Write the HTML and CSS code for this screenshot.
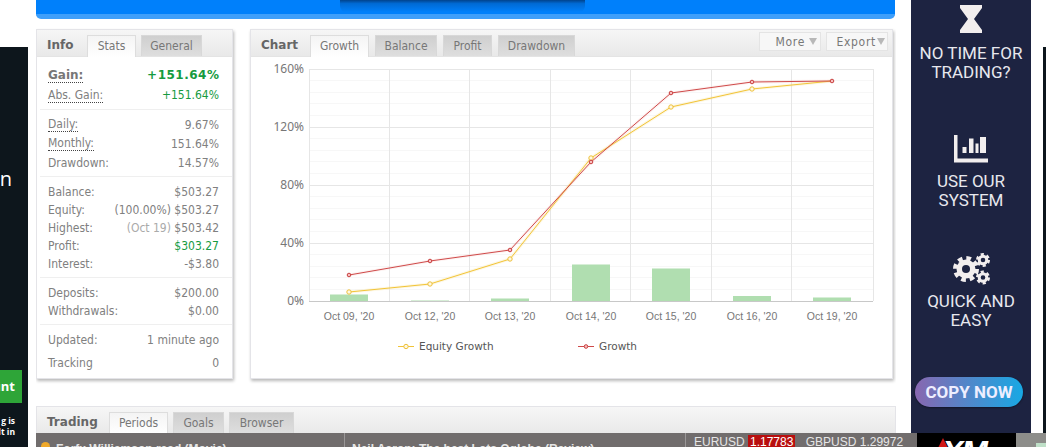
FILE: index.html
```html
<!DOCTYPE html>
<html lang="en">
<head>
<meta charset="utf-8">
<title>Stats</title>
<link rel="stylesheet" href="styles.css">
</head>
<body>
<div class="page">
  <aside class="ad-left">
    <div class="ad-left-word">on</div>
    <div class="ad-left-btn">unt</div>
    <div class="ad-left-small">g is<br>lt in</div>
  </aside>

  <main class="main">
    <div class="hero"><div class="hero-shade"></div></div>

    <div class="panels">
      <section class="panel panel-info">
        <header class="tabs">
          <h2 class="tabs-title">Info</h2>
          <span class="tab tab-on tab-stats">Stats</span>
          <span class="tab tab-general">General</span>
        </header>
        <div class="group g1">
          <div class="row row-big"><span class="dot">Gain:</span><span class="green wide">+151.64%</span></div>
          <div class="row row-tall"><span class="dot">Abs. Gain:</span><span class="green">+151.64%</span></div>
        </div>
        <div class="group g2">
          <div class="row"><span class="dot">Daily:</span><span>9.67%</span></div>
          <div class="row"><span class="dot">Monthly:</span><span>151.64%</span></div>
          <div class="row"><span>Drawdown:</span><span>14.57%</span></div>
        </div>
        <div class="group g3">
          <div class="row"><span>Balance:</span><span>$503.27</span></div>
          <div class="row"><span>Equity:</span><span>(100.00%) $503.27</span></div>
          <div class="row"><span>Highest:</span><span><span class="faint">(Oct 19)</span> $503.42</span></div>
          <div class="row"><span>Profit:</span><span class="green">$303.27</span></div>
          <div class="row"><span>Interest:</span><span>-$3.80</span></div>
        </div>
        <div class="group g3">
          <div class="row"><span>Deposits:</span><span>$200.00</span></div>
          <div class="row"><span>Withdrawals:</span><span>$0.00</span></div>
        </div>
        <div class="group g5">
          <div class="row"><span>Updated:</span><span>1 minute ago</span></div>
          <div class="row"><span>Tracking</span><span>0</span></div>
        </div>
      </section>

      <section class="panel panel-chart">
        <header class="tabs">
          <h2 class="tabs-title">Chart</h2>
          <span class="tab tab-on tab-growth">Growth</span>
          <span class="tab tab-balance">Balance</span>
          <span class="tab tab-profit">Profit</span>
          <span class="tab tab-drawdown">Drawdown</span>
          <div class="tools">
            <span class="tool tool-more">More <i class="caret"></i></span>
            <span class="tool tool-export">Export<i class="caret"></i></span>
          </div>
        </header>
        <svg class="chart" width="641" height="321" viewBox="251 57 641 321" xmlns="http://www.w3.org/2000/svg">
          <g class="minor">
            <path d="M309 80.5H873M309 92.5H873M309 103.500H873M309 115.500H873M309 138.500H873M309 150.500H873M309 161.500H873M309 173.500H873M309 196.500H873M309 208.500H873M309 219.500H873M309 231.500H873M309 254.500H873M309 266.500H873M309 277.500H873M309 289.500H873"/>
          </g>
          <g class="grid">
            <path d="M309 69.5H873M309 127.5H873M309 185.5H873M309 243.5H873"/>
            <path d="M309.5 69V301M389.5 69V301M469.5 69V301M550.5 69V301M630.5 69V301M711.5 69V301M791.5 69V301M873.5 69V301"/>
          </g>
          <g class="bars">
            <rect x="330" y="294.500" width="38" height="7"/>
            <rect x="411" y="300.500" width="38" height="1"/>
            <rect x="491" y="298.500" width="38" height="3"/>
            <rect x="572" y="264.500" width="38" height="37"/>
            <rect x="652" y="268.500" width="38" height="33"/>
            <rect x="733" y="296" width="38" height="5.500"/>
            <rect x="813" y="297.500" width="38" height="4"/>
          </g>
          <path class="axis" d="M309 301.5H873"/>
          <polyline class="halo-eq" points="349,292 430,284 510,259 591,158 671,107 752,89 832,81"/>
          <polyline class="halo-gr" points="349,275 430,261 510,250 591,162 671,93 752,82 832,81"/>
          <polyline class="line-eq" points="349,292 430,284 510,259 591,158 671,107 752,89 832,81"/>
          <polyline class="line-gr" points="349,275 430,261 510,250 591,162 671,93 752,82 832,81"/>
          <g class="pts-eq">
            <circle cx="349" cy="292" r="2.200"/><circle cx="430" cy="284" r="2.200"/><circle cx="510" cy="259" r="2.200"/><circle cx="591" cy="158" r="2.200"/><circle cx="671" cy="107" r="2.200"/><circle cx="752" cy="89" r="2.200"/>
          </g>
          <g class="pts-gr">
            <circle cx="349" cy="275" r="1.800"/><circle cx="430" cy="261" r="1.800"/><circle cx="510" cy="250" r="1.800"/><circle cx="591" cy="162" r="1.800"/><circle cx="671" cy="93" r="1.800"/><circle cx="752" cy="82" r="1.800"/><circle cx="832" cy="81" r="1.800"/>
          </g>
          <g class="ylab">
            <text x="304" y="73">160%</text>
            <text x="304" y="131">120%</text>
            <text x="304" y="189">80%</text>
            <text x="304" y="247">40%</text>
            <text x="304" y="305">0%</text>
          </g>
          <g class="xlab">
            <text x="349" y="320">Oct 09, '20</text>
            <text x="430" y="320">Oct 12, '20</text>
            <text x="510" y="320">Oct 13, '20</text>
            <text x="591" y="320">Oct 14, '20</text>
            <text x="671" y="320">Oct 15, '20</text>
            <text x="752" y="320">Oct 16, '20</text>
            <text x="832" y="320">Oct 19, '20</text>
          </g>
          <g class="legend">
            <path class="line-eq" d="M398 346.5H414"/>
            <circle class="pt-eq" cx="406" cy="346.5" r="2.200"/>
            <text x="419" y="350">Equity Growth</text>
            <path class="line-gr" d="M578 346.5H594"/>
            <circle class="pt-gr" cx="586" cy="346.5" r="1.800"/>
            <text x="599" y="350">Growth</text>
          </g>
        </svg>
      </section>
    </div>

    <section class="panel panel-trading">
      <header class="tabs">
        <h2 class="tabs-title">Trading</h2>
        <span class="tab tab-on tab-periods">Periods</span>
        <span class="tab tab-goals">Goals</span>
        <span class="tab tab-browser">Browser</span>
      </header>
    </section>
  </main>

  <aside class="ad-right">
    <svg class="ico ico-glass" width="22" height="28" viewBox="0 0 22 28"><path d="M0 0H22V3L14 14L22 25V28H0V25L8 14L0 3Z"/></svg>
    <p class="ad-line ad-line-1">NO TIME FOR<br>TRADING?</p>
    <svg class="ico ico-bars" width="36" height="28" viewBox="0 0 36 28"><path d="M1 0H4.500V23.500H35V27.500H1Z"/><path d="M9.500 12H13.500V18H9.500ZM16 3.500H20.500V18H16ZM22.500 8.500H25.500V18H22.500ZM27 2H33V18H27Z"/></svg>
    <p class="ad-line ad-line-2">USE OUR<br>SYSTEM</p>
    <svg class="ico ico-gears" width="38" height="34" viewBox="0 0 38 34">
      <circle class="gear-t" cx="14" cy="17" r="10.500"/><circle class="gear-b" cx="14" cy="17" r="9.500"/><circle class="gear-h" cx="14" cy="17" r="4"/>
      <circle class="gear-ts" cx="31" cy="8" r="5.500"/><circle class="gear-bs" cx="31" cy="8" r="3.800"/>
      <circle class="gear-ts" cx="31" cy="25.500" r="5.500"/><circle class="gear-bs" cx="31" cy="25.500" r="3.800"/>
    </svg>
    <p class="ad-line ad-line-3">QUICK AND<br>EASY</p>
    <div class="copy-btn">COPY NOW</div>
  </aside>

  <aside class="ad-far"></aside>
</div>

<footer class="ticker">
  <div class="tick-news tick-a"><i class="tick-dot"></i>Forfx Williamson read (Movie)</div>
  <div class="tick-news tick-b">Neil Aaron: The best Lots Oglobe (Review)</div>
  <div class="tick-quotes">EURUSD <b class="tick-red">1.17783</b> <span class="tick-gbp">GBPUSD 1.29972</span></div>
  <div class="tick-xm"><span class="xm-mark"></span><span class="xm-text">XM</span></div>
  <div class="tick-end"><i class="tick-green"></i></div>
</footer>
</body>
</html>
```
FILE: styles.css
```css
* { box-sizing: border-box; }
html, body { margin: 0; padding: 0; height: 447px; overflow: hidden; background: #fff; }
body { position: relative; font-family: "DejaVu Sans Condensed", "DejaVu Sans", sans-serif; font-stretch: condensed; font-size: 12px; color: #808080; }

.page { display: flex; width: 1046px; height: 447px; overflow: hidden; }

/* left advert */
.ad-left { flex: 0 0 28px; margin-top: 47px; background: #0d161c; color: #fff; display: flex; flex-direction: column; align-items: flex-end; overflow: hidden; font-family: "Open Sans", sans-serif; font-stretch: normal; }
.ad-left-word { white-space: nowrap; font-size: 20px; line-height: 26px; margin-top: 119px; margin-right: 16px; }
.ad-left-btn { align-self: stretch; display: flex; justify-content: flex-end; margin: 178px 6px 0 0; height: 33px; padding-right: 7px; line-height: 33px; background: #2ea538; font-size: 13px; font-weight: 700; flex: none; overflow: hidden; }
.ad-left-small { white-space: nowrap; margin: 12px 13px 0 0; font-size: 8.500px; line-height: 11px; font-weight: 700; text-align: right; }

/* main */
.main { flex: 0 0 860px; margin-left: 8px; height: 447px; overflow: hidden; }
.hero { width: 859px; height: 19px; background: #0080fb; border-bottom: 5px solid #3f9ffa; border-radius: 0 0 5px 5px; }
.hero-shade { width: 245px; height: 12px; margin-left: 304px; background: linear-gradient(#01438c, #006ad4 30%, #0080fb); border-radius: 0 0 6px 6px; }

.panels { display: flex; gap: 17px; margin-top: 10px; }
.panel { background: #fff; border: 1px solid #e4e4e8; box-shadow: 1px 2px 3px rgba(0, 0, 0, .28); }
.panel-info { flex: 0 0 197px; height: 350px; }
.panel-chart { flex: 0 0 643px; height: 350px; }
.panel-trading { margin-top: 27px; height: 60px; box-shadow: none; }

.tabs { display: flex; align-items: flex-end; height: 27px; background: linear-gradient(#f6f6f6, #e9e9e9); border-bottom: 1px solid #e4e4e4; }
.tabs-title { margin: 0 0 3px 10px; font-family: "DejaVu Sans", sans-serif; font-stretch: normal; font-size: 12px; line-height: 16px; font-weight: 700; color: #666; flex: none; }
.tab { height: 21px; line-height: 21px; text-align: center; color: #777; background: linear-gradient(#cfcfcf, #dedede); border: 1px solid #d8d8d8; border-bottom: 0; flex: none; }
.tab-on { height: 22px; margin-bottom: -1px; background: linear-gradient(#f4f4f4, #fff); border-color: #ddd; }

.panel-info .tabs-title { width: 29px; }
.panel-chart .tabs-title { width: 36px; }
.panel-trading .tabs-title { width: 50px; }
.tab-stats { width: 49px; margin-left: 11px; }
.tab-general { width: 61px; margin-left: 5px; }
.tab-growth { width: 59px; margin-left: 13px; }
.tab-balance { width: 62px; margin-left: 6px; }
.tab-profit { width: 49px; margin-left: 6px; }
.tab-drawdown { width: 77px; margin-left: 6px; }
.tab-periods { width: 59px; margin-left: 12px; }
.tab-goals { width: 51px; margin-left: 5px; }
.tab-browser { width: 65px; margin-left: 5px; }

.tools { display: flex; gap: 5px; margin: 0 4px 5px auto; }
.tool { display: flex; align-items: center; justify-content: flex-end; height: 19px; padding-right: 2px; background: #f7f7f7; border: 1px solid #e4e4e4; color: #777; letter-spacing: .7px; }
.tool-more { width: 62px; gap: 2px; }
.tool-more .caret { margin: 0 1px 0 2px; }
.tool-export { width: 62px; gap: 1px; }
.caret { width: 0; height: 0; border: 4px solid transparent; border-top: 7px solid #b8b8b8; border-bottom: 0; display: block; }

/* stats */
.group { margin: 0 0 0 3px; padding: 5px 13px 5px 8px; border-bottom: 1px solid #efefef; }
.g1 { padding-top: 8px; padding-bottom: 4px; }
.g2 { padding-bottom: 4px; }
.g3 { padding-top: 6px; padding-bottom: 4px; }
.g5 { padding-top: 3px; border-bottom: 0; }
.row { display: flex; justify-content: space-between; align-items: center; height: 18px; line-height: 16px; white-space: nowrap; }
.g2 .row { height: 19px; }
.g1 .row, .row-big, .row-tall { height: 20px; }
.g5 .row { height: 23px; }
.row-big { font-family: "DejaVu Sans", sans-serif; font-stretch: normal; font-weight: 700; font-size: 12px; color: #777; }
.dot { border-bottom: 1px dotted #444; line-height: 14px; }
.green { color: #169b3f; }
.wide { letter-spacing: .5px; margin-right: -.5px; }
.faint { color: #aaa; }

/* chart */
.chart { display: block; }
.grid path { fill: none; stroke: #e6e6e6; stroke-width: 1; }
.minor path { fill: none; stroke: #f7f7f7; stroke-width: 1; }
.axis { stroke: #c8c8c8; fill: none; }
.bars rect { fill: #b0deb0; }
.line-eq { fill: none; stroke: #f2c437; stroke-width: 1; }
.line-gr { fill: none; stroke: #cf4a4a; stroke-width: 1; }
.halo-eq { fill: none; stroke: #f8df8e; stroke-width: 3; opacity: .25; }
.halo-gr { fill: none; stroke: #f0a8a0; stroke-width: 3; opacity: .15; }
.pts-eq circle, .pt-eq { fill: #fff8e0; stroke: #eec03a; stroke-width: 1; }
.pts-gr circle, .pt-gr { fill: #f7c0c0; stroke: #c94040; stroke-width: 1; }
.ylab text { text-anchor: end; font-family: "Noto Sans", sans-serif; font-stretch: normal; font-size: 12px; fill: #777; }
.xlab text { text-anchor: middle; font-family: "Liberation Sans", sans-serif; font-stretch: normal; font-size: 10.500px; fill: #777; }
.legend text { font-family: "DejaVu Sans", sans-serif; font-stretch: normal; font-size: 10.500px; fill: #555; }

/* right advert */
.ad-right { flex: 0 0 120px; margin-left: 15px; height: 433px; background: #1d2341; color: #e8e8ee; display: flex; flex-direction: column; align-items: center; font-family: Roboto, sans-serif; font-stretch: normal; overflow: hidden; }
.ico { display: block; flex: none; fill: #f2eeee; }
.ico-glass { margin-top: 5px; }
.ad-line { margin: 0; font-size: 17px; line-height: 19px; text-align: center; flex: none; }
.ad-line-1 { margin-top: 11px; }
.ad-line-2 { margin-top: 9px; }
.ad-line-3 { margin-top: 6px; }
.ico-bars { margin-top: 53px; }
.ico-gears { margin-top: 42px; }
.gear-t { fill: none; stroke: #f2eeee; stroke-width: 5; stroke-dasharray: 4.500 3.750; }
.gear-b { fill: #f2eeee; }
.gear-h { fill: #1d2341; }
.gear-ts { fill: none; stroke: #f2eeee; stroke-width: 3; stroke-dasharray: 3 2.760; }
.gear-bs { fill: none; stroke: #f2eeee; stroke-width: 3; }
.copy-btn { width: 108px; height: 30px; margin: 47px 4px 0 0; border-radius: 15px; background: linear-gradient(90deg, #8867b0, #18a8e4); color: #eef; font-size: 17px; font-weight: 700; line-height: 30px; text-align: center; flex: none; box-shadow: 0 1px 2px rgba(0, 0, 0, .4); }

/* far right */
.ad-far { flex: 0 0 3px; margin: 47px 0 0 12px; background: #0d161c; }

/* ticker lies over the page bottom */
.ticker { position: absolute; left: 36px; right: 0; bottom: 0; height: 14px; display: flex; background: #716d6d; color: #e6e6e6; font-family: "Liberation Sans", sans-serif; font-stretch: normal; font-size: 12px; overflow: hidden; white-space: nowrap; }
.tick-news { line-height: 14px; padding-top: 9px; font-weight: 700; border-right: 1px solid #9a9797; flex: none; }
.tick-a { width: 309px; padding-left: 20px; position: relative; }
.tick-b { width: 341px; padding-left: 7px; }
.tick-dot { position: absolute; left: 5px; top: 9px; width: 9px; height: 9px; border-radius: 50%; background: #f0a92a; }
.tick-quotes { flex: 0 0 231px; padding-left: 8px; line-height: 14px; padding-top: 2px; }
.tick-red { display: inline-block; background: #b80f0f; color: #fff; font-weight: 400; padding: 0 2px; height: 14px; }
.tick-gbp { margin-left: 7px; }
.tick-xm { flex: 0 0 99px; background: #000; position: relative; overflow: hidden; color: #fff; }
.xm-text { position: absolute; left: 25px; top: 3px; font-family: "Liberation Sans", sans-serif; font-size: 32px; line-height: 32px; font-weight: 700; font-style: italic; letter-spacing: -2px; }
.xm-mark { position: absolute; left: 21px; top: 5px; border: 5px solid transparent; border-bottom: 10px solid #d01818; border-top: 0; }
.tick-end { flex: 1; background: #8d8d8a; position: relative; }
.tick-green { position: absolute; left: 20px; top: 10px; width: 10px; height: 4px; background: #bfe0c8; }
```
